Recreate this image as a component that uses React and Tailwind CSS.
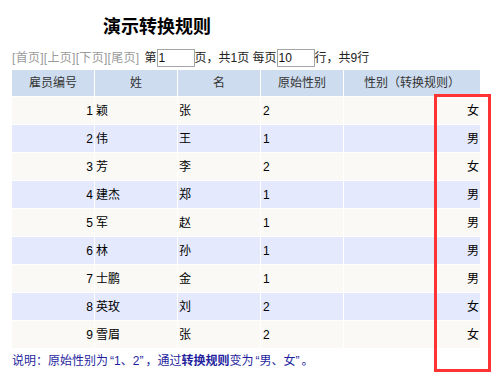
import React from "react";

const rows = [
  ["1", "颖", "张", "2", "女"],
  ["2", "伟", "王", "1", "男"],
  ["3", "芳", "李", "2", "女"],
  ["4", "建杰", "郑", "1", "男"],
  ["5", "军", "赵", "1", "男"],
  ["6", "林", "孙", "1", "男"],
  ["7", "士鹏", "金", "1", "男"],
  ["8", "英玫", "刘", "2", "女"],
  ["9", "雪眉", "张", "2", "女"],
];

const headers = ["雇员编号", "姓", "名", "原始性别", "性别（转换规则）"];

export default function App() {
  return (
    <div className="relative w-[496px] h-[381px] bg-white text-[12px] text-black font-['Liberation_Sans','Noto_Sans_CJK_SC',sans-serif]">
      <div className="h-[49px] pl-[103px] pt-[15px] text-[18px] font-bold leading-[24px] text-black">
        演示转换规则
      </div>
      <div className="flex h-[18px] items-center pl-[12px] leading-[18px]">
        <span className="tracking-[0.3px] text-[#9a9a9a]">[首页][上页][下页][尾页]</span>
        <span className="ml-[5px] text-[#222]">第</span>
        <div className="h-[18px] w-[38px] border border-[#a5a5a5] pl-[1px] leading-[16px] text-[#111]">1</div>
        <span className="text-[#222]">页，共1页 每页</span>
        <div className="h-[18px] w-[38px] border border-[#a5a5a5] pl-[1px] leading-[16px] text-[#111]">10</div>
        <span className="text-[#222]">行，共9行</span>
      </div>
      <div className="mx-[12px] mt-[3px] grid grid-cols-[82px_82px_82px_82px_136px] gap-px bg-white">
        {headers.map((h) => (
          <div key={h} className="flex h-[26px] items-center justify-center bg-[#cddcee] text-[#333]">
            {h}
          </div>
        ))}
        {rows.map((r, i) => {
          const bg = i % 2 === 0 ? "bg-[#faf9f5]" : "bg-[#e4e9fd]";
          return (
            <React.Fragment key={i}>
              <div className={`flex h-[27px] items-center justify-end pr-[1px] ${bg}`}>{r[0]}</div>
              <div className={`flex h-[27px] items-center pl-[1px] ${bg}`}>{r[1]}</div>
              <div className={`flex h-[27px] items-center pl-[1px] ${bg}`}>{r[2]}</div>
              <div className={`flex h-[27px] items-center pl-[2px] ${bg}`}>{r[3]}</div>
              <div className={`flex h-[27px] items-center justify-end pr-[1px] ${bg}`}>{r[4]}</div>
            </React.Fragment>
          );
        })}
      </div>
      <div className="mt-[6px] h-[14px] pl-[12px] leading-[14px] text-[#1f1f9e]">
        说明：原始性别为<span className="ml-[2px]">“</span>1、2<span className="mr-[2px]">”</span>，通过<span className="font-bold">转换规则</span>变为<span className="ml-[2px]">“</span>男、女<span className="mr-[2px]">”</span>。
      </div>
      <div className="absolute left-[434px] top-[94px] h-[278px] w-[57px] border-[3px] border-[#ff3333]" />
    </div>
  );
}
